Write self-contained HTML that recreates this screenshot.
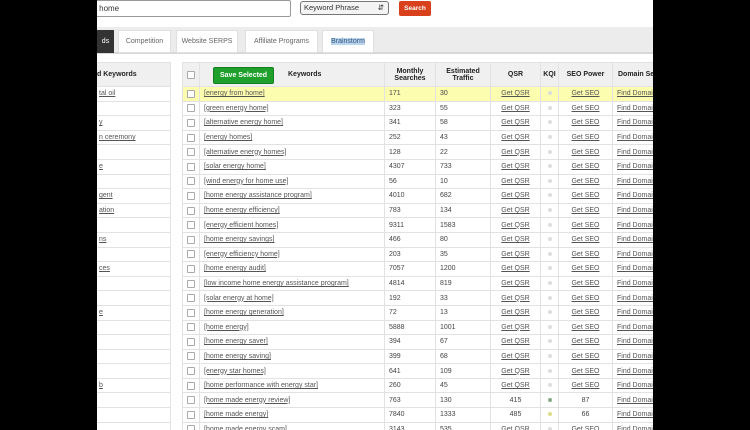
<!DOCTYPE html>
<html><head><meta charset="utf-8"><style>
body{margin:0;width:750px;height:430px;overflow:hidden;background:#000;font-family:"Liberation Sans",sans-serif;position:relative}
#pg{position:absolute;left:97px;top:0;width:556px;height:430px;background:#fff;overflow:hidden}
.abs{position:absolute}
#tabs{left:0;top:27px;width:556px;height:25px;background:#ececec;border-bottom:2px solid #d8d8d8}
.tab{position:absolute;top:3px;height:21px;background:#fff;border:1px solid #e0e0e0;font-size:7px;color:#666;line-height:21px;text-align:center}
table{border-collapse:collapse;table-layout:fixed;font-size:7px;color:#444}
td{border:1px solid #e2e2e2;height:13.6px;padding:0 0 0 4px;white-space:nowrap;overflow:hidden}
th{border:1px solid #e2e2e2;background:#f0f0f0;font-size:7px;color:#222;height:23px;padding:0}
a{color:#555;text-decoration:underline}
.c{text-align:center;padding:0}
.cb{display:inline-block;width:6px;height:6px;border:1px solid #aaa;border-radius:1px;background:#fff;vertical-align:middle}
.dot{display:inline-block;width:4px;height:4px;border-radius:50%;background:#ddd}
tr.y td{background:#fdfdb0}
</style></head><body>
<div id="pg">
<div class="abs" style="left:-10px;top:0;width:202px;height:15px;border:1px solid #999;border-radius:2px;font-size:8px;line-height:15px;color:#333">&nbsp;&nbsp;&nbsp;&nbsp;&nbsp;home</div>
<div class="abs" style="left:203px;top:1px;width:84px;height:12px;border:1px solid #777;border-radius:3px;background:#f4f4f4;font-size:7.5px;line-height:12px;color:#333;padding-left:3px">Keyword Phrase<span style="position:absolute;right:4px">&#8693;</span></div>
<div class="abs" style="left:302px;top:1px;width:32px;height:15px;background:#d9401c;border-radius:2px;color:#fff;font-size:6.5px;font-weight:bold;text-align:center;line-height:15px">Search</div>
<div class="abs" id="tabs">
<div class="tab" style="left:0;width:15px;background:#333;border-color:#333;color:#fff">ds</div>
<div class="tab" style="left:21px;width:51px">Competition</div>
<div class="tab" style="left:79px;width:60px">Website SERPS</div>
<div class="tab" style="left:148px;width:71px">Affiliate Programs</div>
<div class="tab" style="left:225px;width:50px"><span style="background:#b8d4f0;color:#357">Brainstorm</span></div>
</div>
<table class="abs" style="left:-30px;top:62px;width:104px">
<tr><th style="text-align:left;padding-left:8px">Related Keywords</th></tr>
</table>
<table class="abs" id="side" style="left:-30px;top:86px;width:104px"></table>
<table class="abs" style="left:85px;top:62px;width:490px" id="main">
<colgroup><col style="width:17px"><col style="width:185px"><col style="width:51px"><col style="width:55px"><col style="width:50px"><col style="width:18px"><col style="width:54px"><col style="width:60px"></colgroup>
<tr><th><span class="cb"></span></th><th style="text-align:left;position:relative"><span style="position:absolute;left:13px;top:4px;background:#1fa02c;color:#fff;padding:0 6px;height:15px;line-height:15px;border-radius:2px;border:1px solid #138020">Save Selected</span><span style="margin-left:88px">Keywords</span></th><th>Monthly<br>Searches</th><th>Estimated<br>Traffic</th><th>QSR</th><th>KQI</th><th>SEO Power</th><th style="text-align:left;padding-left:5px">Domain Search</th></tr>
</table>
</div>
<script>
var d=[["energy from home",171,30],["green energy home",323,55],["alternative energy home",341,58],["energy homes",252,43],["alternative energy homes",128,22],["solar energy home",4307,733],["wind energy for home use",56,10],["home energy assistance program",4010,682],["home energy efficiency",783,134],["energy efficient homes",9311,1583],["home energy savings",466,80],["energy efficiency home",203,35],["home energy audit",7057,1200],["low income home energy assistance program",4814,819],["solar energy at home",192,33],["home energy generation",72,13],["home energy",5888,1001],["home energy saver",394,67],["home energy saving",399,68],["energy star homes",641,109],["home performance with energy star",260,45],["home made energy review",763,130,415,87,"#8a8"],["home made energy",7840,1333,485,66,"#dd8"],["home made energy scam",3143,535]];
var m=document.getElementById('main'),h='';
d.forEach(function(r,i){
var q=r[3]?r[3]:'<a>Get QSR</a>';
var s=r[4]?r[4]:'<a>Get SEO</a>';
h+='<tr'+(i==0?' class="y"':'')+'><td class="c"><span class="cb"></span></td><td><a>['+r[0]+']</a></td><td>'+r[1]+'</td><td>'+r[2]+'</td><td class="c">'+q+'</td><td class="c"><span class="dot"'+(r[5]?' style="background:'+r[5]+'"':'')+'></span></td><td class="c">'+s+'</td><td><a>Find Domains</a></td></tr>';});
m.insertAdjacentHTML('beforeend',h);
var sd={0:"tal oil",2:"y",3:"n ceremony",5:"e",7:"gent",8:"ation",10:"ns",12:"ces",15:"e",20:"b"},sh='';
for(var i=0;i<24;i++)sh+='<tr><td style="padding-left:31px"><a>'+(sd[i]||'')+'</a></td></tr>';
document.getElementById('side').innerHTML=sh;
</script>
</body></html>
